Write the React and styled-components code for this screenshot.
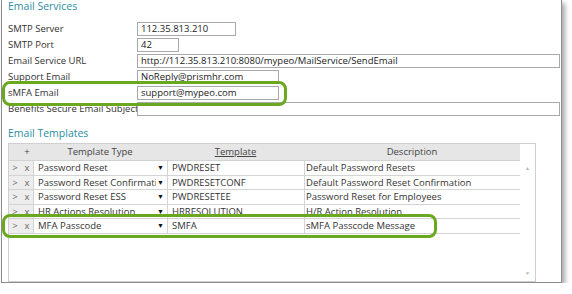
import styled, { createGlobalStyle } from "styled-components";

const GlobalStyle = createGlobalStyle`
  body {
    margin: 0;
    background: #fff;
    font-family: "Open Sans", "Noto Sans", sans-serif;
    font-size: 9.5px;
    color: #333;
  }
`;

const settings = [
  { label: "SMTP Server", value: "112.35.813.210", width: 99 },
  { label: "SMTP Port", value: "42", width: 42 },
  {
    label: "Email Service URL",
    value: "http://112.35.813.210:8080/mypeo/MailService/SendEmail",
    width: 423,
  },
  { label: "Support Email", value: "NoReply@prismhr.com", width: 142 },
  { label: "sMFA Email", value: "support@mypeo.com", width: 142 },
  { label: "Benefits Secure Email Subject", value: "", width: 423 },
];

const templates = [
  ["Password Reset", "PWDRESET", "Default Password Resets"],
  ["Password Reset Confirmation", "PWDRESETCONF", "Default Password Reset Confirmation"],
  ["Password Reset ESS", "PWDRESETEE", "Password Reset for Employees"],
  ["HR Actions Resolution", "HRRESOLUTION", "H/R Action Resolution"],
  ["MFA Passcode", "SMFA", "sMFA Passcode Message"],
];

const App = () => {
  return (
    <>
      <GlobalStyle />
      <Panel>
        <Heading>Email Services</Heading>
        <Form>
          {settings.map((s) => (
            <FormRow key={s.label}>
              <Label>{s.label}</Label>
              <Field $width={s.width}>{s.value}</Field>
            </FormRow>
          ))}
        </Form>

        <Heading $gap={10}>Email Templates</Heading>
        <TableFrame>
          <Grid>
            <HeaderRow>
              <HeadCell />
              <HeadCell>+</HeadCell>
              <HeadCell>Template Type</HeadCell>
              <HeadCell $sortable>Template</HeadCell>
              <HeadCell>Description</HeadCell>
            </HeaderRow>
            {templates.map(([type, code, desc]) => (
              <Row key={code}>
                <ActionCell>&gt;</ActionCell>
                <ActionCell>x</ActionCell>
                <SelectCell>
                  <SelectText>{type}</SelectText>
                  <Caret>▼</Caret>
                </SelectCell>
                <Cell>{code}</Cell>
                <Cell $tight>{desc}</Cell>
              </Row>
            ))}
          </Grid>
          <Scroller>
            <ScrollArrow>▲</ScrollArrow>
            <ScrollArrow>▼</ScrollArrow>
          </Scroller>
        </TableFrame>

        <Highlight $top={81} $width={285} $height={25} />
        <Highlight $top={214} $width={435} $height={24} />
      </Panel>
    </>
  );
};

const Panel = styled.div`
  position: relative;
  box-sizing: border-box;
  width: 561px;
  height: 283px;
  margin-left: 1px;
  padding: 0 1px 0 6px;
  background: #fff;
  border: 1px solid #8c8c8c;
  border-top: none;
  box-shadow: 3px 3px 5px rgba(0, 0, 0, 0.35);
`;

const Heading = styled.div`
  margin-top: ${(p) => p.$gap || 0}px;
  font-size: 10.5px;
  line-height: 12px;
  color: #2c8da3;
`;

const Form = styled.div`
  margin-top: 9px;
  display: flex;
  flex-direction: column;
`;

const FormRow = styled.div`
  display: flex;
  align-items: center;
  height: 16px;
`;

const Label = styled.div`
  flex: none;
  width: 129px;
  line-height: 16px;
  white-space: nowrap;
  overflow: hidden;
  color: #333;
`;

const Field = styled.div`
  flex: none;
  box-sizing: border-box;
  width: ${(p) => p.$width}px;
  height: 14px;
  padding: 0 3px;
  border: 1px solid #a9a9a9;
  line-height: 12px;
  color: #222;
  white-space: nowrap;
  overflow: hidden;
`;

const TableFrame = styled.div`
  margin-top: 4px;
  box-sizing: border-box;
  display: flex;
  width: 528px;
  height: 139px;
  border: 1px solid #cfcfcf;
`;

const Grid = styled.div`
  flex: none;
  width: 511px;
`;

const columns = "12px 12px 134px 137px 1fr";

const HeaderRow = styled.div`
  display: grid;
  grid-template-columns: ${columns};
  box-sizing: border-box;
  height: 17px;
  background: #e6e6e6;
  border-bottom: 1px solid #d2d2d2;
`;

const HeadCell = styled.div`
  text-align: center;
  line-height: 16px;
  color: #444;
  text-decoration: ${(p) => (p.$sortable ? "underline" : "none")};
`;

const Row = styled.div`
  display: grid;
  grid-template-columns: ${columns};
  box-sizing: border-box;
  height: 14.5px;
  border-bottom: 1px solid #d4d4d4;
`;

const ActionCell = styled.div`
  background: #ededed;
  color: #666;
  text-align: center;
  line-height: 13.5px;
`;

const Cell = styled.div`
  background: #fff;
  border-left: 1px solid #d4d4d4;
  padding-left: ${(p) => (p.$tight ? 1 : 4)}px;
  line-height: 13.5px;
  color: #333;
  white-space: nowrap;
  overflow: hidden;
`;

const SelectCell = styled(Cell)`
  display: flex;
  align-items: center;
  padding-right: 3px;
`;

const SelectText = styled.span`
  flex: 1;
  min-width: 0;
  overflow: hidden;
  margin-right: 1px;
`;

const Caret = styled.span`
  flex: none;
  font-size: 7px;
  line-height: 13px;
  color: #111;
`;

const Scroller = styled.div`
  flex: 1;
  display: flex;
  flex-direction: column;
  justify-content: space-between;
  align-items: center;
  padding: 20px 0 4px;
`;

const ScrollArrow = styled.div`
  font-size: 5px;
  line-height: 8px;
  color: #b4b4b4;
`;

const Highlight = styled.div`
  position: absolute;
  left: 0;
  top: ${(p) => p.$top}px;
  width: ${(p) => p.$width}px;
  height: ${(p) => p.$height}px;
  box-sizing: border-box;
  border: 3px solid #6aa81f;
  border-radius: 8px;
  pointer-events: none;
`;

export default App;
